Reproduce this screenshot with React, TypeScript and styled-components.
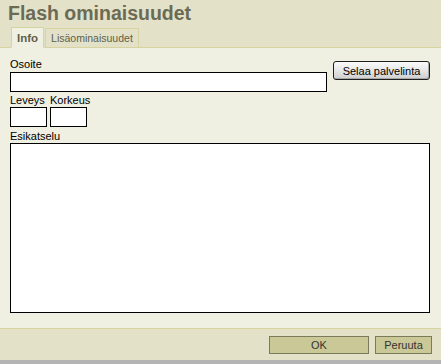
import React from 'react';
import styled, { createGlobalStyle } from 'styled-components';

const GlobalStyle = createGlobalStyle`
  html, body {
    margin: 0;
    padding: 0;
    background: #b4b4b4;
  }
  body {
    font-family: "Liberation Sans", Arial, sans-serif;
  }
`;

const Dialog = styled.div`
  width: 441px;
  height: 360px;
  display: flex;
  flex-direction: column;
  background: #efefe2;
`;

const Header = styled.div`
  background: #e3e2c9;
  border-bottom: 1px solid #d6d3a1;
  padding: 1px 0 0;
`;

const Title = styled.h1`
  margin: 0;
  padding: 0 8px;
  font-size: 19.5px;
  line-height: 24px;
  font-weight: bold;
  color: #6b6b55;
`;

const Tabs = styled.div`
  display: flex;
  align-items: flex-end;
  padding: 2px 0 0 11px;
  margin-bottom: -1px;
`;

const Tab = styled.div<{ $active?: boolean }>`
  height: ${({ $active }) => ($active ? '21px' : '20px')};
  box-sizing: border-box;
  padding: 0 5px;
  display: flex;
  align-items: center;
  font-size: ${({ $active }) => ($active ? '11.5px' : '10.5px')};
  font-weight: ${({ $active }) => ($active ? 'bold' : 'normal')};
  color: #5f5f4a;
  background: ${({ $active }) => ($active ? '#efefe2' : '#e3e2c9')};
  border: 1px solid #d6d3a1;
  border-bottom-color: ${({ $active }) => ($active ? '#efefe2' : '#d6d3a1')};
  margin-right: 1px;
`;

const Body = styled.div`
  flex: 1;
  padding: 9px 11px 0 10px;
  border-bottom: 1px solid #d6d3a1;
  color: #000;
  font-size: 11px;
`;

const UrlGrid = styled.div`
  display: grid;
  grid-template-columns: 1fr auto;
  column-gap: 6px;
`;

const Label = styled.div<{ $gap?: number }>`
  line-height: 14px;
  height: 14px;
  margin-top: ${({ $gap }) => $gap ?? 0}px;
  white-space: nowrap;
`;

const TextInput = styled.div<{ $w?: number; $gap?: number }>`
  box-sizing: border-box;
  height: 20px;
  width: ${({ $w }) => ($w ? `${$w}px` : 'auto')};
  margin-top: ${({ $gap }) => $gap ?? 0}px;
  background: #fff;
  border: 1px solid #000;
`;

const BrowseButton = styled.button`
  grid-column: 2;
  grid-row: 1 / span 2;
  align-self: center;
  margin-top: -8px;
  width: 97px;
  height: 19px;
  padding: 0;
  font-family: "Liberation Sans", Arial, sans-serif;
  font-size: 11px;
  color: #000;
  border: 1px solid #1e1e1e;
  border-radius: 3px;
  background: linear-gradient(#fbfbfb 0%, #e8e8e8 45%, #cfcfcf 100%);
  box-shadow: inset -1px -1px 0 #a8a8a8;
`;

const SizeRow = styled.div`
  display: flex;
  gap: 3px;
  margin-top: 1px;
`;

const SizeField = styled.div`
  display: flex;
  flex-direction: column;
`;

const Preview = styled.div`
  height: 170px;
  box-sizing: border-box;
  background: #fff;
  border: 1px solid #000;
`;

const Footer = styled.div`
  height: 31px;
  background: #e3e2c9;
  display: flex;
  justify-content: flex-end;
  align-items: center;
  gap: 6px;
  padding-right: 9px;
`;

const FooterButton = styled.button<{ $w: number }>`
  width: ${({ $w }) => $w}px;
  height: 18px;
  padding: 0;
  font-family: "Liberation Sans", Arial, sans-serif;
  font-size: 11px;
  color: #333;
  background: #c9c896;
  border: 1px solid #7b7a5a;
`;

export default function App() {
  return (
    <>
      <GlobalStyle />
      <Dialog>
        <Header>
          <Title>Flash ominaisuudet</Title>
          <Tabs>
            <Tab $active>Info</Tab>
            <Tab>Lisäominaisuudet</Tab>
          </Tabs>
        </Header>
        <Body>
          <UrlGrid>
            <Label>Osoite</Label>
            <TextInput $gap={1} />
            <BrowseButton>Selaa palvelinta</BrowseButton>
          </UrlGrid>
          <SizeRow>
            <SizeField>
              <Label>Leveys</Label>
              <TextInput $w={37} />
            </SizeField>
            <SizeField>
              <Label>Korkeus</Label>
              <TextInput $w={37} />
            </SizeField>
          </SizeRow>
          <Label $gap={2}>Esikatselu</Label>
          <Preview />
        </Body>
        <Footer>
          <FooterButton $w={100}>OK</FooterButton>
          <FooterButton $w={57}>Peruuta</FooterButton>
        </Footer>
      </Dialog>
    </>
  );
}
